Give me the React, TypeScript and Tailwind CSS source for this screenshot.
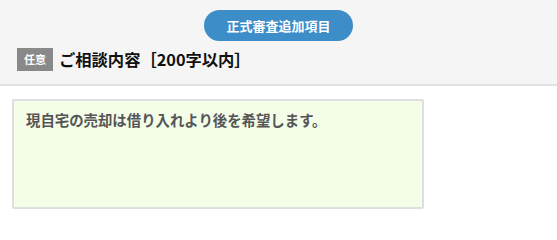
export default function App() {
  return (
    <div className="w-[557px] h-[222px] bg-white font-['Noto_Sans_CJK_JP','Noto_Sans',sans-serif]">
      {/* Header */}
      <div className="bg-[#f5f5f5] border-b-2 border-[#e2e2e2] pt-[10px] pb-[13px] px-[17px]">
        <div className="flex justify-center">
          <button className="h-[31px] w-[149px] rounded-full bg-[#3c8dc8] text-white text-[13px] font-bold leading-none">
            正式審査追加項目
          </button>
        </div>
        <div className="mt-[7px] flex items-center gap-[6px]">
          <span className="h-[23px] w-[36px] flex items-center justify-center bg-[#898989] text-white text-[11px] font-bold leading-none">
            任意
          </span>
          <h2 className="text-[16.3px] font-bold text-[#111] leading-none">ご相談内容［200字以内］</h2>
        </div>
      </div>

      {/* Body */}
      <div className="pt-[13px] pl-[12px]">
        <textarea
          readOnly
          defaultValue="現自宅の売却は借り入れより後を希望します。"
          className="block w-[412px] h-[110px] resize-none rounded-[2px] border-2 border-[#dfdfdf] bg-[#f3fde8] px-[12px] pt-[8px] text-[14.4px] font-bold leading-[1.5] text-[#555] outline-none"
        />
      </div>
    </div>
  )
}
